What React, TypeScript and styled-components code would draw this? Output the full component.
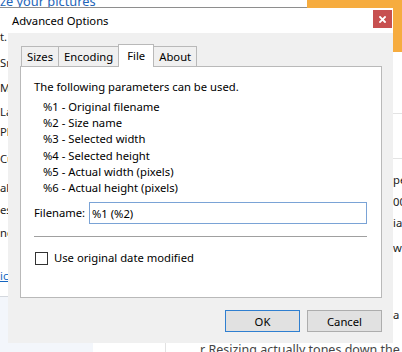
import React from "react";
import styled, { createGlobalStyle } from "styled-components";

const UI_FONT = `"Noto Sans", "Open Sans", "Liberation Sans", sans-serif`;
const FS = "11.25px";

const Global = createGlobalStyle`
  html, body { margin: 0; padding: 0; width: 402px; height: 352px; overflow: hidden; background: #fff; }
  body { font-family: ${UI_FONT}; }
  * { box-sizing: border-box; }
`;

const Screen = styled.div`
  display: grid;
  grid-template-columns: 8px 385px 9px;
  grid-template-rows: 8px 335px 9px;
  width: 402px;
  height: 352px;
  overflow: hidden;
  background: #fff;
  font-family: ${UI_FONT};
  font-size: ${FS};
  color: #000;
`;

/* ---------- background page ---------- */

const TopStrip = styled.div`
  grid-column: 1 / 4;
  grid-row: 1;
  display: flex;
`;

const HeadingArea = styled.div`
  width: 307px;
  height: 8px;
  border-bottom: 1px solid #8e8e8e;
  overflow: hidden;
`;

const Heading = styled.h1`
  margin: -6px 0 0 0;
  font-size: 12.8px;
  line-height: 14px;
  font-weight: 400;
  color: #2365b8;
  white-space: nowrap;
`;

const OrangeTop = styled.div`
  flex: 1;
  background: #f6ac3f;
`;

const SideCol = styled.div`
  grid-row: 2;
  display: flex;
  flex-direction: column;
  overflow: hidden;
  font-size: ${FS};
  line-height: 16px;
  color: #222;
  white-space: nowrap;
`;

const LeftCol = styled(SideCol)`
  grid-column: 1;
`;

const RightCol = styled(SideCol)`
  grid-column: 3;
`;

const Frag = styled.div<{ $gap: number; $link?: boolean }>`
  margin-top: ${(p) => p.$gap}px;
  height: 16px;
  flex: none;
  color: ${(p) => (p.$link ? "#1565c0" : "#222")};
  text-decoration: ${(p) => (p.$link ? "underline" : "none")};
`;

const LeftFooter = styled.div`
  flex: 1;
  margin-top: 12px;
  border-top: 1px solid #d4d8de;
  background: #f3f6fb;
`;

const OrangeSide = styled.div`
  height: 44px;
  flex: none;
  background: #f6ac3f;
`;

const Rule = styled.div<{ $gap: number }>`
  margin-top: ${(p) => p.$gap}px;
  height: 1px;
  flex: none;
  background: #e3e3e3;
`;

const BottomStrip = styled.div`
  grid-column: 1 / 4;
  grid-row: 3;
  display: flex;
  overflow: hidden;
`;

const BottomShade = styled.div`
  width: 93px;
  background: #f3f6fb;
`;

const BottomBlank = styled.div`
  width: 72px;
`;

const BottomText = styled.div`
  flex: 1;
  border-left: 1px solid #e2e2e2;
  padding-left: 34px;
  font-size: 12.5px;
  line-height: 13px;
  color: #444;
  white-space: nowrap;
`;

/* ---------- dialog ---------- */

const Dialog = styled.div`
  grid-column: 2;
  grid-row: 2;
  display: flex;
  flex-direction: column;
  background: #f0f0f0;
`;

const TitleBar = styled.div`
  height: 25px;
  flex: none;
  background: #fff;
  display: flex;
  align-items: flex-start;
  justify-content: space-between;
  padding: 0 1px 0 4px;
`;

const Title = styled.span`
  line-height: 25px;
  font-size: ${FS};
  color: #000;
`;

const CloseButton = styled.button`
  margin-top: 2px;
  width: 19px;
  height: 18px;
  border: none;
  padding: 0;
  background: #c75050;
  display: flex;
  align-items: center;
  justify-content: center;
`;

const Body = styled.div`
  flex: 1;
  display: flex;
  flex-direction: column;
  padding: 11px 11px 11px 12px;
`;

const TabStrip = styled.div`
  display: flex;
  align-items: flex-start;
  height: 23px;
  margin-bottom: -1px;
  padding-left: 1px;
  position: relative;
  z-index: 1;
`;

const Tab = styled.div<{ $active?: boolean }>`
  position: relative;
  z-index: ${(p) => (p.$active ? 2 : 1)};
  margin-top: ${(p) => (p.$active ? 0 : 2)}px;
  height: ${(p) => (p.$active ? 23 : 20)}px;
  margin-left: -1px;
  padding: 0 ${(p) => (p.$active ? 8 : 5)}px;
  padding-bottom: ${(p) => (p.$active ? 2 : 0)}px;
  border: 1px solid #b9b9b9;
  border-bottom: none;
  background: ${(p) => (p.$active ? "#fff" : "#f0f0f0")};
  display: flex;
  align-items: center;
  font-size: ${FS};
  color: #000;
  &:first-child { margin-left: 0; }
`;

const Panel = styled.div`
  flex: 1;
  background: #fff;
  border: 1px solid #b9b9b9;
  padding: 12px 14px 0 13px;
  display: flex;
  flex-direction: column;
  font-size: ${FS};
  line-height: 16px;
`;

const Intro = styled.div``;

const ParamList = styled.ul`
  list-style: none;
  margin: 4px 0 0 0;
  padding: 0 0 0 9px;
  line-height: 16.2px;
`;

const FieldRow = styled.div`
  margin-top: 6px;
  display: flex;
  align-items: center;
`;

const FieldLabel = styled.label`
  width: 55px;
  flex: none;
`;

const TextInput = styled.input`
  flex: 1;
  height: 22px;
  border: 1px solid #7aa3d6;
  padding: 0 0 0 2px;
  font-family: ${UI_FONT};
  font-size: ${FS};
  color: #000;
  outline: none;
  background: #fff;
`;

const Separator = styled.hr`
  margin: 12px 0 0 0;
  border: none;
  height: 1px;
  background: #a0a0a0;
`;

const CheckRow = styled.label`
  margin-top: 13px;
  display: flex;
  align-items: center;
  gap: 6px;
  margin-left: 1px;
`;

const CheckBox = styled.span`
  width: 13px;
  height: 13px;
  border: 1px solid #333;
  background: #fff;
  flex: none;
`;

const ButtonRow = styled.div`
  margin-top: 12px;
  display: flex;
  justify-content: flex-end;
  gap: 7px;
`;

const Button = styled.button<{ $primary?: boolean }>`
  width: 75px;
  height: 22px;
  padding: 0;
  background: #e1e1e1;
  border: 1px solid ${(p) => (p.$primary ? "#2f7fd0" : "#adadad")};
  font-family: ${UI_FONT};
  font-size: ${FS};
  color: #000;
`;

const params = [
  "%1 - Original filename",
  "%2 - Size name",
  "%3 - Selected width",
  "%4 - Selected height",
  "%5 - Actual width (pixels)",
  "%6 - Actual height (pixels)",
];

const leftFrags: { text: string; gap: number; link?: boolean }[] = [
  { text: "t.", gap: 21 },
  { text: "Small", gap: 10 },
  { text: "Medium", gap: 9 },
  { text: "Large", gap: 8 },
  { text: "Phone", gap: 4 },
  { text: "Custom", gap: 11 },
  { text: "ake", gap: 13 },
  { text: "esi", gap: 6 },
  { text: "nc", gap: 7 },
  { text: "ici", gap: 27, link: true },
];

const rightFrags: { text: string; gap: number }[] = [
  { text: "pe", gap: 13 },
  { text: "00", gap: 6 },
  { text: "ia", gap: 5 },
  { text: "w", gap: 9 },
  { text: "a", gap: 51 },
];

export default function App() {
  return (
    <>
      <Global />
      <Screen>
        <TopStrip>
          <HeadingArea>
            <Heading>ze your pictures</Heading>
          </HeadingArea>
          <OrangeTop />
        </TopStrip>

        <LeftCol>
          {leftFrags.map((f, i) => (
            <Frag key={i} $gap={f.gap} $link={f.link}>
              {f.text}
            </Frag>
          ))}
          <LeftFooter />
        </LeftCol>

        <Dialog>
          <TitleBar>
            <Title>Advanced Options</Title>
            <CloseButton aria-label="Close">
              <svg width="7" height="7" viewBox="0 0 7 7">
                <path d="M1 1 L6 6 M6 1 L1 6" stroke="#fff" strokeWidth="1.8" strokeLinecap="square" />
              </svg>
            </CloseButton>
          </TitleBar>
          <Body>
            <TabStrip>
              <Tab>Sizes</Tab>
              <Tab>Encoding</Tab>
              <Tab $active>File</Tab>
              <Tab>About</Tab>
            </TabStrip>
            <Panel>
              <Intro>The following parameters can be used.</Intro>
              <ParamList>
                {params.map((p) => (
                  <li key={p}>{p}</li>
                ))}
              </ParamList>
              <FieldRow>
                <FieldLabel>Filename:</FieldLabel>
                <TextInput defaultValue="%1 (%2)" />
              </FieldRow>
              <Separator />
              <CheckRow>
                <CheckBox />
                <span>Use original date modified</span>
              </CheckRow>
            </Panel>
            <ButtonRow>
              <Button $primary>OK</Button>
              <Button>Cancel</Button>
            </ButtonRow>
          </Body>
        </Dialog>

        <RightCol>
          <OrangeSide />
          <Rule $gap={61} />
          <Rule $gap={44} />
          {rightFrags.map((f, i) => (
            <Frag key={i} $gap={f.gap}>
              {f.text}
            </Frag>
          ))}
        </RightCol>

        <BottomStrip>
          <BottomShade />
          <BottomBlank />
          <BottomText>r Resizing actually tones down the</BottomText>
        </BottomStrip>
      </Screen>
    </>
  );
}
